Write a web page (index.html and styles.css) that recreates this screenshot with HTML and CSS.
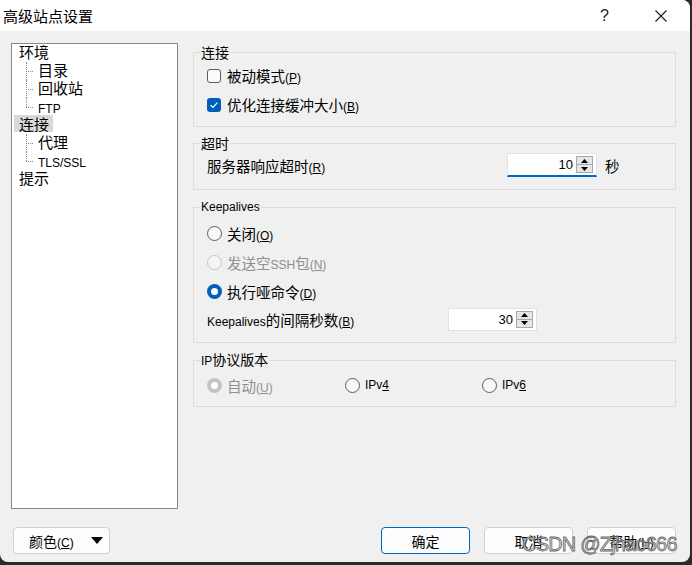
FILE: index.html
```html
<!DOCTYPE HTML>
<html lang="zh-CN">

<head>
    <meta charset="utf-8">
    <title>高级站点设置</title>
    <link rel="stylesheet" href="styles.css">
</head>

<body>
    <div class="window">
        <div class="titlebar">
            <span class="title">高级站点设置</span>
            <span class="help">?</span>
            <span class="close">
                <svg width="12" height="12" viewBox="0 0 12 12"><path d="M0.5 0.5L11.5 11.5M11.5 0.5L0.5 11.5" stroke="#1b1b1b" stroke-width="1.1" fill="none"/></svg>
            </span>
        </div>

        <div class="body">
            <div class="main">
                <!-- page tree -->
                <div class="tree">
                    <div class="node"><span class="label">环境</span></div>
                    <div class="node child"><span class="twig"></span><span class="label">目录</span></div>
                    <div class="node child"><span class="twig"></span><span class="label">回收站</span></div>
                    <div class="node child"><span class="twig last"></span><span class="label en">FTP</span></div>
                    <div class="node"><span class="label selected">连接</span></div>
                    <div class="node child"><span class="twig"></span><span class="label">代理</span></div>
                    <div class="node child"><span class="twig last"></span><span class="label en">TLS/SSL</span></div>
                    <div class="node"><span class="label">提示</span></div>
                </div>

                <div class="panel">
                    <fieldset class="group g-conn">
                        <legend>连接</legend>
                        <div class="row"><span class="check"></span><span>被动模式<span class="en">(<u>P</u>)</span></span></div>
                        <div class="row">
                            <span class="check on"><svg width="14" height="14" viewBox="0 0 14 14"><path d="M3.6 7.2L6 9.4L10.4 4.6" stroke="#fff" stroke-width="1.2" fill="none"/></svg></span>
                            <span>优化连接缓冲大小<span class="en">(<u>B</u>)</span></span>
                        </div>
                    </fieldset>

                    <fieldset class="group g-timeout">
                        <legend>超时</legend>
                        <div class="row">
                            <span class="lbl lbl-timeout">服务器响应超时<span class="en">(<u>R</u>)</span></span>
                            <span class="spin focus">
                                <span class="val">10</span>
                                <span class="arrows">
                                    <span class="arr"><svg width="7" height="4" viewBox="0 0 7 4"><path d="M3.5 0L7 4H0Z" fill="#000"/></svg></span>
                                    <span class="arr"><svg width="7" height="4" viewBox="0 0 7 4"><path d="M0 0H7L3.5 4Z" fill="#000"/></svg></span>
                                </span>
                            </span>
                            <span class="unit">秒</span>
                        </div>
                    </fieldset>

                    <fieldset class="group g-keep">
                        <legend class="en">Keepalives</legend>
                        <div class="row"><span class="radio"></span><span>关闭<span class="en">(<u>O</u>)</span></span></div>
                        <div class="row disabled"><span class="radio"></span><span>发送空<span class="en">SSH</span>包<span class="en">(<u>N</u>)</span></span></div>
                        <div class="row"><span class="radio on"></span><span>执行哑命令<span class="en">(<u>D</u>)</span></span></div>
                        <div class="row">
                            <span class="lbl lbl-keep"><span class="en">Keepalives</span>的间隔秒数<span class="en">(<u>B</u>)</span></span>
                            <span class="spin small">
                                <span class="val">30</span>
                                <span class="arrows">
                                    <span class="arr"><svg width="7" height="4" viewBox="0 0 7 4"><path d="M3.5 0L7 4H0Z" fill="#000"/></svg></span>
                                    <span class="arr"><svg width="7" height="4" viewBox="0 0 7 4"><path d="M0 0H7L3.5 4Z" fill="#000"/></svg></span>
                                </span>
                            </span>
                        </div>
                    </fieldset>

                    <fieldset class="group g-ip">
                        <legend><span class="en">IP</span>协议版本</legend>
                        <div class="row">
                            <span class="opt opt-auto disabled"><span class="radio on"></span><span>自动<span class="en">(<u>U</u>)</span></span></span>
                            <span class="opt opt-v4"><span class="radio"></span><span class="en">IPv<u>4</u></span></span>
                            <span class="opt"><span class="radio"></span><span class="en">IPv<u>6</u></span></span>
                        </div>
                    </fieldset>
                </div>
            </div>

            <div class="footer">
                <button class="btn btn-color"><span>颜色<span class="en">(<u>C</u>)</span></span><span class="drop"></span></button>
                <div class="btn-group">
                    <button class="btn default">确定</button>
                    <button class="btn">取消</button>
                    <button class="btn">帮助<span class="en">(<u>H</u>)</span></button>
                </div>
            </div>
        </div>

        <div class="watermark">CSDN @Zjhao666</div>
    </div>
</body>

</html>
```

FILE: styles.css
```css
body {
    margin: 0;
    background-color: #2b2b2b;
    font-family: "Noto Sans CJK SC", sans-serif;
    font-size: 14.5px;
    color: #000;
}

.window {
    position: relative;
    width: 690px;
    height: 562px;
    background-color: #f0f0f0;
    border-radius: 0 8px 8px 8px;
    overflow: hidden;
}

.en {
    font-family: "Liberation Sans", sans-serif;
    font-size: 12px;
}

/* title bar */
.titlebar {
    height: 31px;
    background-color: #fff;
    display: flex;
    align-items: center;
    padding: 0 23px 0 3px;
}

.title {
    font-size: 15px;
}

.help {
    margin-left: auto;
    font-family: "Liberation Sans", sans-serif;
    font-size: 16px;
    color: #1b1b1b;
}

.close {
    display: flex;
    margin-left: 46px;
}

.body {
    padding: 12px 0 0 11px;
}

.main {
    display: flex;
}

/* tree */
.tree {
    box-sizing: border-box;
    width: 167px;
    height: 466px;
    background-color: #fff;
    border: 1px solid #828790;
    font-size: 15px;
}

.node {
    height: 18px;
    display: flex;
    align-items: center;
    padding-left: 2px;
}

.node .label {
    padding: 0 4px 0 5px;
    line-height: 17px;
    margin-top: -3px;
}

.node .label.en {
    font-size: 12px;
    margin-top: 4px;
}

.node .selected {
    background-color: #d9d9d9;
}

.node.child {
    padding-left: 14px;
}

.twig {
    position: relative;
    align-self: stretch;
    width: 7px;
}

.twig::before {
    content: "";
    position: absolute;
    left: 0;
    top: 0;
    bottom: 0;
    border-left: 1px dotted #8a8a8a;
}

.twig.last::before {
    bottom: 9px;
}

.twig::after {
    content: "";
    position: absolute;
    left: 0;
    right: 0;
    top: 9px;
    border-top: 1px dotted #8a8a8a;
}

/* right panel */
.panel {
    width: 483px;
    margin-left: 15px;
    padding-top: 1px;
}

.group {
    margin: 0;
    padding: 0 0 0 13px;
    border: 1px solid #dcdcdc;
    min-width: 0;
}

.group legend {
    margin-left: -7px;
    padding: 0 1px;
    line-height: 16px;
    font-size: 14px;
}

.group legend.en {
    font-size: 12px;
}

.row {
    display: flex;
    align-items: center;
    height: 29px;
}

.g-conn {
    padding-top: 1px;
    padding-bottom: 7px;
}

.g-timeout {
    margin-top: 8px;
    padding-bottom: 10px;
}

.g-timeout .row {
    height: 28px;
}

.g-keep {
    margin-top: 9px;
    padding-top: 4px;
    padding-bottom: 10px;
}

.g-keep .row:last-child {
    height: 26px;
}

.g-ip {
    margin-top: 8px;
    padding-top: 2px;
    padding-bottom: 7px;
}

.g-ip .row {
    height: 28px;
}

/* checkbox and radio */
.check {
    box-sizing: border-box;
    width: 14px;
    height: 14px;
    border: 1px solid #5c5c5c;
    border-radius: 3px;
    background-color: #fbfbfb;
    margin-right: 6px;
    display: flex;
}

.check.on {
    border: none;
    background-color: #005fb8;
}

.radio {
    box-sizing: border-box;
    width: 15px;
    height: 15px;
    border: 1px solid #5c5c5c;
    border-radius: 50%;
    background-color: #f8f8f8;
    margin-right: 5px;
    display: flex;
    align-items: center;
    justify-content: center;
}

.radio.on {
    border: none;
    background-color: #005fb8;
}

.radio.on::after {
    content: "";
    width: 7px;
    height: 7px;
    border-radius: 50%;
    background-color: #fff;
}

.disabled {
    color: #8f8f8f;
}

.disabled .radio {
    border-color: #c6c6c6;
    background-color: #f5f5f5;
}

.disabled .radio.on {
    background-color: #c4c4c4;
}

.opt {
    display: flex;
    align-items: center;
}

.opt-auto {
    width: 138px;
}

.opt-v4 {
    width: 137px;
}

/* spin boxes */
.lbl-timeout {
    width: 300px;
}

.lbl-keep {
    width: 241px;
}

.spin {
    box-sizing: border-box;
    width: 90px;
    height: 24px;
    background-color: #fff;
    border: 1px solid #e2e2e2;
    display: flex;
    align-items: center;
    padding-right: 3px;
}

.spin.focus {
    border-bottom: 2px solid #0067c0;
}

.spin.small {
    width: 89px;
    height: 23px;
}

.spin .val {
    flex: 1;
    text-align: right;
    padding-right: 3px;
    font-family: "Liberation Sans", sans-serif;
    font-size: 13px;
}

.arrows {
    box-sizing: border-box;
    width: 17px;
    height: 17px;
    border: 1px solid #a8a8a8;
    background-color: #e6e6e6;
    display: flex;
    flex-direction: column;
}

.arr {
    flex: 1;
    display: flex;
    align-items: center;
    justify-content: center;
}

.arr + .arr {
    border-top: 1px solid #a8a8a8;
}

.unit {
    margin-left: 8px;
}

/* footer buttons */
.footer {
    display: flex;
    justify-content: space-between;
    margin-top: 18px;
    padding: 0 14px 0 2px;
}

.btn {
    box-sizing: border-box;
    height: 27px;
    width: 89px;
    background-color: #fdfdfd;
    border: 1px solid #d0d0d0;
    border-radius: 4px;
    font-family: "Noto Sans CJK SC", sans-serif;
    font-size: 14px;
    color: #000;
    padding: 0;
}

.btn.default {
    border-color: #0067c0;
}

.btn-group {
    display: flex;
    gap: 14px;
}

.btn-color {
    width: 97px;
    display: flex;
    align-items: center;
    padding: 0 6px 0 15px;
}

.drop {
    margin-left: auto;
    width: 0;
    height: 0;
    border-left: 6px solid transparent;
    border-right: 6px solid transparent;
    border-top: 7px solid #000;
}

.watermark {
    position: absolute;
    left: 522px;
    top: 533px;
    font-family: "Liberation Sans", sans-serif;
    font-size: 20px;
    letter-spacing: -0.8px;
    color: rgba(205, 205, 205, 0.7);
    -webkit-text-stroke: 0.8px rgba(85, 85, 85, 0.9);
}
```
